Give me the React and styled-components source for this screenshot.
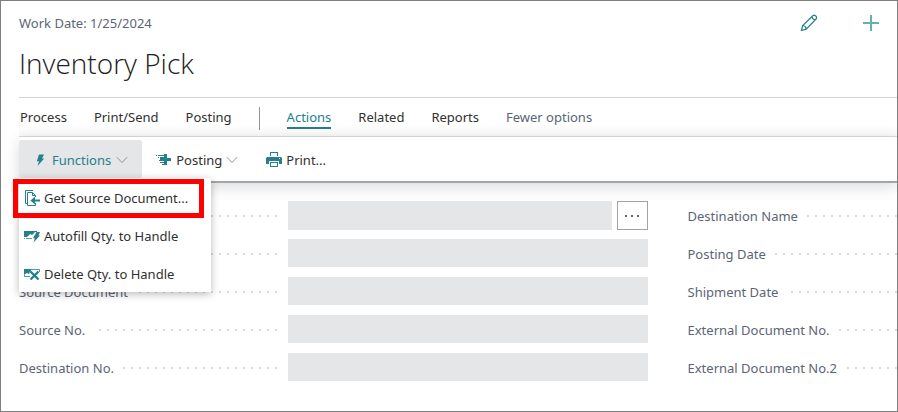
import React from 'react';
import styled, { createGlobalStyle } from 'styled-components';

const teal = '#24808a';
const slate = '#5b6577';

const GlobalStyle = createGlobalStyle`
  * { box-sizing: border-box; }
  body { margin: 0; background: #fff; }
  body, button, input { font-family: "Noto Sans", "Open Sans", sans-serif; font-size: 13px; line-height: 18px; }
  button { border: 0; padding: 0; background: none; color: inherit; cursor: pointer; }
`;

const Page = styled.main`
  min-height: 100vh;
  border: 1px solid #7f7f7f;
  padding-left: 18px;
  overflow: hidden;
  color: #303030;
`;

const Header = styled.header`
  display: flex;
  justify-content: space-between;
  align-items: flex-start;
  padding: 13px 17px 14px 0;
  border-bottom: 1px solid #d2d4d8;
`;

const WorkDate = styled.p`
  margin: 0;
  color: ${slate};
`;

const Title = styled.h1`
  margin: 12px 0 0;
  font-family: "Open Sans", "Noto Sans", sans-serif;
  font-size: 28px;
  font-weight: 300;
  line-height: 39px;
  color: #212121;
`;

const HeaderTools = styled.div`
  display: flex;
  gap: 44px;
`;

const IconButton = styled.button`
  display: flex;
  width: 18px;
  height: 18px;
  color: ${teal};
`;

const Tabs = styled.nav`
  display: flex;
  align-items: center;
  height: 39px;
  padding: 2px 0 0 1px;
  gap: 27px;
  background: linear-gradient(#fff 70%, #f8f8f8);
  border-bottom: 1px solid #d8dadc;
`;

const Tab = styled.button`
  height: 22px;
  white-space: nowrap;
  color: ${(p) => (p.$active ? teal : p.$muted ? slate : '#303030')};
  border-bottom: 2px solid ${(p) => (p.$active ? teal : 'transparent')};
`;

const Divider = styled.span`
  width: 1px;
  height: 23px;
  background: #8e96a0;
`;

const ActionBar = styled.div`
  position: relative;
  display: flex;
  align-items: center;
  height: 46px;
  border-bottom: 2px solid #a0a6a9;
  box-shadow: 0 4px 14px rgba(0, 0, 0, 0.14);
  z-index: 1;
`;

const MenuAnchor = styled.div`
  position: relative;
`;

const Action = styled.button`
  display: flex;
  align-items: center;
  gap: ${(p) => (p.$open ? 5 : 4)}px;
  height: 38px;
  padding: 2px 14px 0;
  white-space: nowrap;
  border-radius: 2px;
  color: ${(p) => (p.$open ? teal : '#303030')};
  background: ${(p) => (p.$open ? '#e4e6e8' : 'transparent')};
`;

const Menu = styled.div`
  position: absolute;
  top: 38px;
  left: 0;
  width: 192px;
  background: #fff;
  box-shadow: 0 2px 8px rgba(0, 0, 0, 0.28);
`;

const MenuItem = styled.button`
  position: relative;
  display: flex;
  align-items: center;
  gap: 4px;
  width: 100%;
  height: 38px;
  padding: 2px 5px 0;
  white-space: nowrap;
  color: #303030;

  &::after {
    content: "";
    display: ${(p) => (p.$highlighted ? 'block' : 'none')};
    position: absolute;
    inset: 1px 7px -2px -6px;
    border: 5px solid #f00;
  }
`;

const Icon = styled.svg`
  flex: none;
  display: block;
  color: ${teal};
`;

const ChevronIcon = styled(Icon)`
  color: #8b959d;
`;

const Fields = styled.form`
  display: grid;
  grid-template-columns: 3fr 1fr;
  column-gap: 40px;
  padding: 18px 0 20px;
`;

const Column = styled.div`
  display: grid;
  grid-auto-rows: 29px;
  row-gap: 9px;
  min-width: 0;
`;

const FieldRow = styled.div`
  display: grid;
  grid-template-columns: ${(p) => (p.$labelOnly ? '1fr' : '3fr 4fr')};
`;

const Label = styled.label`
  display: flex;
  align-items: center;
  gap: 8px;
  min-width: 0;
  padding-right: ${(p) => (p.$labelOnly ? 0 : 11)}px;
  white-space: nowrap;
  color: ${slate};

  &::after {
    content: "";
    flex: 1;
    height: 2px;
    background: repeating-linear-gradient(to left, #d9dadc 0 2px, transparent 2px 8px);
  }
`;

const Control = styled.div`
  display: flex;
  gap: 5px;
`;

const TextBox = styled.input`
  flex: 1;
  min-width: 0;
  height: ${(p) => (p.$tall ? 29 : 28)}px;
  padding: 0 8px;
  border: 0;
  border-radius: 0;
  background: #e4e6e8;
`;

const LookupButton = styled.button`
  display: grid;
  place-items: center;
  width: 31px;
  height: 29px;
  border: 1px solid #a3a3a3;
  color: #303030;
`;

const Chevron = () => (
  <ChevronIcon width="12" height="8" viewBox="0 0 12 8" fill="none" stroke="currentColor">
    <path d="M.8 1.2 6 6.500l5.200-5.300" />
  </ChevronIcon>
);

const Bolt = () => (
  <Icon width="14" height="14" viewBox="0 0 14 14" fill="currentColor">
    <path d="M6 1.500h5L9 5.500h2.200L4.500 13 6 8.200H3.800z" />
  </Icon>
);

const PostIcon = () => (
  <Icon width="16" height="14" viewBox="0 0 16 14" fill="currentColor">
    <path d="M8 1h3v4h4v3h-4v4H8V8H4V5h4zM0 2h1v1H0zM2 2h6v1H2zM2 4h1v1H2zM4 4h4v1H4zM3 7h2v1H3zM4 9h4v1H4zM6 11h2v1H6z" />
  </Icon>
);

const PrinterIcon = () => (
  <Icon width="16" height="16" viewBox="0 0 16 16" fill="currentColor">
    <path d="M4 0h8v4h-1V1H5v3H4z" />
    <path fillRule="evenodd" d="M1 5h14l1 1v6h-3V9H3v3H0V6zM13 6h1v1h-1z" />
    <path fillRule="evenodd" d="M4 10h8v5H4zM5 11v3h6v-3z" />
  </Icon>
);

const SourceIcon = () => (
  <Icon width="16" height="18" viewBox="0 0 16 18" fill="none" stroke="currentColor">
    <path d="M3 14.500H1.500v-13H9" />
    <path d="M11.500 14v2.500h-8v-13h5l3 3V8" />
    <path d="M8.500 3.500v3h3" />
    <path d="M6.500 11.500 11 7.500v3h5v2h-5v3z" fill="currentColor" stroke="none" />
  </Icon>
);

const AutofillIcon = () => (
  <Icon width="16" height="14" viewBox="0 0 16 14" fill="currentColor">
    <path d="M0 2h13v1h-2L8 6 6 5 3 8H0z" />
    <path d="M0 9h1v1H0zM2 9h6v1H2z" opacity=".75" />
    <path d="M12.500 3H16l-1.500 3.500H16L9.500 13.500l1.300-4.300H9z" />
  </Icon>
);

const DeleteIcon = () => (
  <Icon width="16" height="14" viewBox="0 0 16 14" fill="none" stroke="currentColor">
    <path d="M6 2.500h9.500V5M.5 8v1.500H6" opacity=".8" />
    <path d="M0 2h7v3L5 7 3 6 0 8z" fill="currentColor" stroke="none" />
    <path d="m6.500 4.500 8 8M14.500 4.500l-8 8" stroke="#fff" strokeWidth="4" />
    <path d="m6.500 4.500 8 8M14.500 4.500l-8 8" strokeWidth="2.400" />
  </Icon>
);

const PencilIcon = () => (
  <Icon width="18" height="18" viewBox="0 0 18 18" fill="none" stroke="currentColor" strokeWidth="1.200">
    <path d="m1.500 16.500 1.200-5L12.800 1.700c2-1.500 4.800 1.300 3.300 3.300L6.200 15.200zM2.700 11.500c2 .2 3.300 1.600 3.500 3.700M12 2.800c.2 1.800 1.400 3 3.200 3.200" />
  </Icon>
);

const PlusIcon = () => (
  <Icon width="18" height="18" viewBox="0 0 18 18" fill="none" stroke="#62b0b5" strokeWidth="2">
    <path d="M9 1v16M1 9h16" />
  </Icon>
);

const EllipsisIcon = () => (
  <svg width="16" height="4" viewBox="0 0 16 4" fill="currentColor">
    <circle cx="2" cy="2" r="1" />
    <circle cx="8" cy="2" r="1" />
    <circle cx="14" cy="2" r="1" />
  </svg>
);

const leftFields = [
  { id: 'no', label: 'No.', lookup: true },
  { id: 'location', label: 'Location Code' },
  { id: 'source-document', label: 'Source Document' },
  { id: 'source-no', label: 'Source No.' },
  { id: 'destination-no', label: 'Destination No.' },
];

const rightFields = [
  'Destination Name',
  'Posting Date',
  'Shipment Date',
  'External Document No.',
  'External Document No.2',
];

export default function App() {
  return (
    <>
      <GlobalStyle />
      <Page>
        <Header>
          <div>
            <WorkDate>Work Date: 1/25/2024</WorkDate>
            <Title>Inventory Pick</Title>
          </div>
          <HeaderTools>
            <IconButton aria-label="Edit"><PencilIcon /></IconButton>
            <IconButton aria-label="New"><PlusIcon /></IconButton>
          </HeaderTools>
        </Header>
        <Tabs>
          <Tab>Process</Tab>
          <Tab>Print/Send</Tab>
          <Tab>Posting</Tab>
          <Divider />
          <Tab $active>Actions</Tab>
          <Tab>Related</Tab>
          <Tab>Reports</Tab>
          <Tab $muted>Fewer options</Tab>
        </Tabs>
        <ActionBar>
          <MenuAnchor>
            <Action $open aria-haspopup="menu" aria-expanded="true">
              <Bolt />Functions<Chevron />
            </Action>
            <Menu role="menu">
              <MenuItem role="menuitem" $highlighted><SourceIcon />Get Source Document...</MenuItem>
              <MenuItem role="menuitem"><AutofillIcon />Autofill Qty. to Handle</MenuItem>
              <MenuItem role="menuitem"><DeleteIcon />Delete Qty. to Handle</MenuItem>
            </Menu>
          </MenuAnchor>
          <Action aria-haspopup="menu"><PostIcon />Posting<Chevron /></Action>
          <Action><PrinterIcon />Print...</Action>
        </ActionBar>
        <Fields>
          <Column>
            {leftFields.map((field) => (
              <FieldRow key={field.id}>
                <Label htmlFor={field.id}>{field.label}</Label>
                <Control>
                  <TextBox id={field.id} $tall={field.lookup} readOnly />
                  {field.lookup && (
                    <LookupButton type="button" aria-label="Look up"><EllipsisIcon /></LookupButton>
                  )}
                </Control>
              </FieldRow>
            ))}
          </Column>
          <Column>
            {rightFields.map((label) => (
              <FieldRow key={label} $labelOnly>
                <Label as="span" $labelOnly>{label}</Label>
              </FieldRow>
            ))}
          </Column>
        </Fields>
      </Page>
    </>
  );
}
